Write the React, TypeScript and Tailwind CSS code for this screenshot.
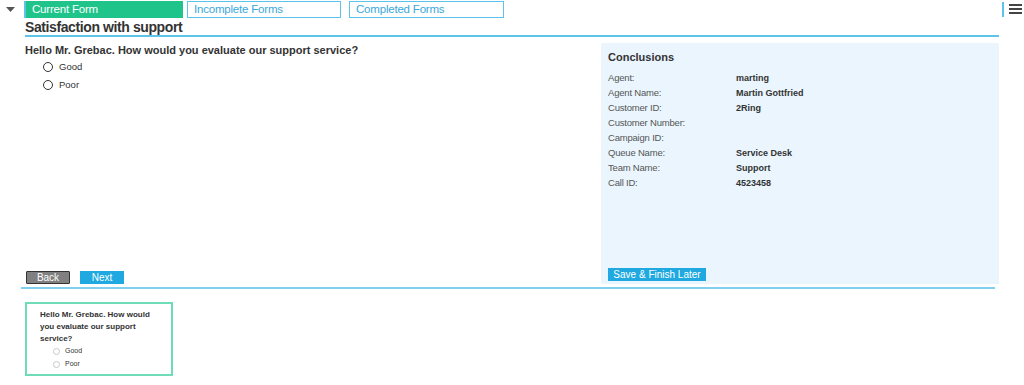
import React from "react";

const rows: [string, string][] = [
  ["Agent:", "marting"],
  ["Agent Name:", "Martin Gottfried"],
  ["Customer ID:", "2Ring"],
  ["Customer Number:", ""],
  ["Campaign ID:", ""],
  ["Queue Name:", "Service Desk"],
  ["Team Name:", "Support"],
  ["Call ID:", "4523458"],
];

function Radio({ size = 10, faint = false }: { size?: number; faint?: boolean }) {
  return (
    <span
      className={`inline-block rounded-full border bg-white ${faint ? "border-[#c8c8c8]" : "border-[#333]"}`}
      style={{ width: size, height: size }}
    />
  );
}

export default function App() {
  return (
    <div className="w-[1024px] h-[385px] bg-white text-[#333] overflow-hidden" style={{ fontFamily: '"Liberation Sans", Arial, sans-serif' }}>
      <div className="flex">
        <div className="flex-1">
          {/* header */}
          <div className="flex items-center h-[18px] pt-[1px]">
            <div className="w-[24px] flex justify-center pl-[1px]">
              <svg width="9" height="5" viewBox="0 0 9 5" className="mr-[5px]">
                <path d="M0 0 L9 0 L4.5 5 Z" fill="#555" />
              </svg>
            </div>
            <div className="w-[2px] h-[17px] bg-[#5ec3ea]" />
            <div className="flex">
              <div className="w-[157px] h-[17px] bg-[#1fc48b] text-white text-[11.5px] tracking-[-0.2px] leading-[17px] pl-[6px]">Current Form</div>
              <div className="w-[154px] h-[17px] border border-[#5ec3ea] text-[#39a9dc] text-[11.5px] tracking-[-0.2px] leading-[15px] pl-[6px] ml-[4px]">Incomplete Forms</div>
              <div className="w-[155px] h-[17px] border border-[#5ec3ea] text-[#39a9dc] text-[11.5px] tracking-[-0.2px] leading-[15px] pl-[6px] ml-[8px]">Completed Forms</div>
            </div>
          </div>
          {/* title */}
          <div className="ml-[25px] mr-[3px] mt-[1px] border-b-2 border-[#5ec3ea] h-[18px] text-[14px] tracking-[-0.4px] font-bold leading-[17px] text-[#333]">
            Satisfaction with support
          </div>
          {/* content */}
          <div className="flex ml-[25px] mr-[3px] mt-[6px]">
            <div className="flex-1 flex flex-col h-[241px]">
              <div className="text-[11px] font-bold leading-[13px] mt-[1px]">Hello Mr. Grebac. How would you evaluate our support service?</div>
              <div className="flex flex-col gap-[6px] mt-[4px] ml-[18px] text-[9.5px]">
                <label className="flex items-center gap-[6px] h-[12px]"><Radio />Good</label>
                <label className="flex items-center gap-[6px] h-[12px]"><Radio />Poor</label>
              </div>
              <div className="mt-auto flex gap-[10px] ml-[1px]">
                <button className="w-[44px] h-[13px] bg-[#808080] border border-[#333] text-white text-[10px] leading-[11px] rounded-[1px]">Back</button>
                <button className="w-[44px] h-[13px] bg-[#20a9e0] text-white text-[10px] leading-[13px]">Next</button>
              </div>
            </div>
            <div className="w-[398px] h-[241px] bg-[#eaf5fe] flex flex-col px-[7px]">
              <div className="text-[11px] font-bold mt-[8px] leading-[13px]">Conclusions</div>
              <div className="mt-[7px] flex flex-col">
                {rows.map(([l, v]) => (
                  <div key={l} className="flex h-[15px] items-center text-[9.5px]">
                    <div className="w-[128px] text-[#555] tracking-[-0.2px]">{l}</div>
                    <div className="font-bold text-[9px] text-[#333]">{v}</div>
                  </div>
                ))}
              </div>
              <div className="mt-auto mb-[3px] flex">
                <div className="w-[98px] h-[13px] bg-[#20a9e0] text-white text-[10px] leading-[13px] text-center">Save &amp; Finish Later</div>
              </div>
            </div>
          </div>
          {/* divider */}
          <div className="ml-[21px] mr-[7px] mt-[3px] h-[2px] bg-[#7fd0ef]" />
          {/* preview box */}
          <div className="ml-[25px] mt-[13px] w-[148px] h-[74px] border-2 border-[#6fdcb8] px-[13px] pt-[5px]">
            <div className="text-[8px] font-bold leading-[12px] text-[#333]">Hello Mr. Grebac. How would you evaluate our support service?</div>
            <div className="flex flex-col gap-[3px] mt-[1px] ml-[13px] text-[7px] text-[#333]">
              <label className="flex items-center gap-[5px] h-[10px]"><Radio size={7} faint />Good</label>
              <label className="flex items-center gap-[5px] h-[10px]"><Radio size={7} faint />Poor</label>
            </div>
          </div>
        </div>
        {/* right column */}
        <div className="w-[22px] flex items-start pt-[2px]">
          <div className="w-[2px] h-[15px] bg-[#5ec3ea]" />
          <div className="flex flex-col gap-[2px] ml-[5px] mt-[2px]">
            <div className="w-[13px] h-[2px] bg-[#444]" />
            <div className="w-[13px] h-[2px] bg-[#444]" />
            <div className="w-[13px] h-[2px] bg-[#444]" />
          </div>
        </div>
      </div>
    </div>
  );
}
